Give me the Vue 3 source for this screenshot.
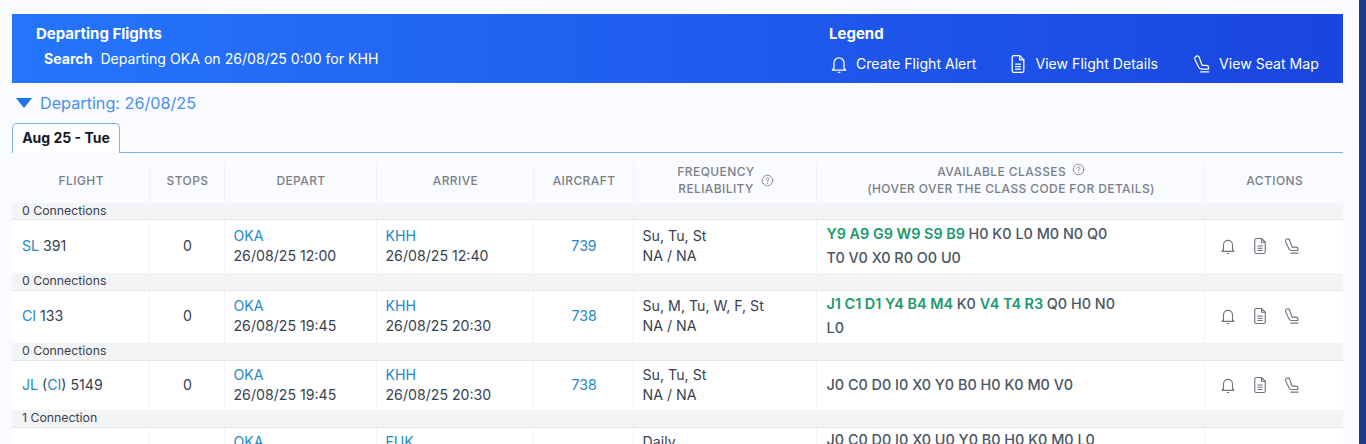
<script setup>
const rows = [
  { conn: '0 Connections', flight: [['SL', 1], [' 391', 0]], stops: '0', from: 'OKA', dep: '26/08/25 12:00', to: 'KHH', arr: '26/08/25 12:40', ac: '739', freq: 'Su, Tu, St', rel: 'NA / NA', parts: [['Y9 A9 G9 W9 S9 B9 ', 1], ['H0 K0 L0 M0 N0 Q0', 0]], cls2: 'T0 V0 X0 R0 O0 U0', h: 'r1' },
  { conn: '0 Connections', flight: [['CI', 1], [' 133', 0]], stops: '0', from: 'OKA', dep: '26/08/25 19:45', to: 'KHH', arr: '26/08/25 20:30', ac: '738', freq: 'Su, M, Tu, W, F, St', rel: 'NA / NA', parts: [['J1 C1 D1 Y4 B4 M4 ', 1], ['K0 ', 0], ['V4 T4 R3 ', 1], ['Q0 H0 N0', 0]], cls2: 'L0', h: 'r2' },
  { conn: '0 Connections', flight: [['JL', 1], [' (', 0], ['CI', 1], [') 5149', 0]], stops: '0', from: 'OKA', dep: '26/08/25 19:45', to: 'KHH', arr: '26/08/25 20:30', ac: '738', freq: 'Su, Tu, St', rel: 'NA / NA', parts: [['J0 C0 D0 I0 X0 Y0 B0 H0 K0 M0 V0', 0]], h: 'r3' },
  { conn: '1 Connection', flight: [], stops: '', from: 'OKA', dep: '', to: 'FUK', arr: '', ac: '', freq: 'Daily', rel: '', parts: [['J0 C0 D0 I0 X0 U0 Y0 B0 H0 K0 M0 L0', 0]], h: 'r4', noIcons: true }
]
</script>

<template>
  <div class="page">
    <main class="main">
      <header class="banner">
        <div class="b-left">
          <div class="b-title">Departing Flights</div>
          <div class="b-search"><b>Search</b><span>Departing OKA on 26/08/25 0:00 for KHH</span></div>
        </div>
        <div class="b-right">
          <div class="b-title">Legend</div>
          <div class="legend">
            <span class="lg lg1">
              <svg class="ic-lg" viewBox="0 0 24 24"><path d="M6 17V10.500a6 6 0 0 1 12 0V17l2 2.200H4z" /><path d="M11 22h2" /></svg>
              Create Flight Alert
            </span>
            <span class="lg lg2">
              <svg class="ic-lg" viewBox="0 0 24 24"><path d="M5 4a2 2 0 0 1 2-2h7l5 5v13a2 2 0 0 1-2 2H7a2 2 0 0 1-2-2z" /><path d="M14 2v5h5M9 12h6M9 15h6M9 18h6" /></svg>
              View Flight Details
            </span>
            <span class="lg">
              <svg class="ic-lg" viewBox="0 0 24 24"><path d="M4.500 3c1.800-1.200 3.600-.6 4.200 1l3.300 9.500h5c1.700 0 2.800 1 2.800 2.500v2H11.500c-1.700 0-2.800-.7-3.400-2L3.500 6.500C3.100 5.300 3.400 3.800 4.500 3z" /><path d="M10.500 21.500h9.500" /></svg>
              View Seat Map
            </span>
          </div>
        </div>
      </header>

      <div class="departing">
        <svg class="caret" viewBox="0 0 16 10"><path d="M0 0h16L8 10z" /></svg>
        Departing: 26/08/25
      </div>

      <div class="tabs"><div class="tab">Aug 25 - Tue</div></div>

      <table class="grid">
        <colgroup>
          <col class="c1" /><col class="c2" /><col class="c3" /><col class="c4" />
          <col class="c5" /><col class="c6" /><col class="c7" /><col class="c8" />
        </colgroup>
        <thead>
          <tr>
            <th class="first">FLIGHT</th>
            <th>STOPS</th>
            <th>DEPART</th>
            <th>ARRIVE</th>
            <th>AIRCRAFT</th>
            <th>
              <div class="freq-h">
                <div>FREQUENCY<br />RELIABILITY</div>
                <svg class="help" viewBox="0 0 16 16"><circle cx="8" cy="8" r="6.500" /><path d="M6.200 6.300a1.800 1.800 0 1 1 2.700 1.600c-.6.300-.9.700-.9 1.300M8 11.500v.3" /></svg>
              </div>
            </th>
            <th>
              AVAILABLE CLASSES
              <svg class="help help2" viewBox="0 0 16 16"><circle cx="8" cy="8" r="6.500" /><path d="M6.200 6.300a1.800 1.800 0 1 1 2.700 1.600c-.6.300-.9.700-.9 1.300M8 11.500v.3" /></svg>
              <br />(HOVER OVER THE CLASS CODE FOR DETAILS)
            </th>
            <th>ACTIONS</th>
          </tr>
        </thead>
        <tbody v-for="row in rows" :key="row.h">
          <tr class="conn" :class="{ 'conn-first': row.h === 'r1' }"><td colspan="8">{{ row.conn }}</td></tr>
          <tr class="flight" :class="row.h">
            <td class="fl"><template v-for="(p, i) in row.flight" :key="i"><span :class="{ link: p[1] }">{{ p[0] }}</span></template></td>
            <td class="center">{{ row.stops }}</td>
            <td class="pl"><div class="link">{{ row.from }}</div><div>{{ row.dep }}</div></td>
            <td class="pl"><div class="link">{{ row.to }}</div><div>{{ row.arr }}</div></td>
            <td class="center link">{{ row.ac }}</td>
            <td class="freq"><div>{{ row.freq }}</div><div>{{ row.rel }}</div></td>
            <td class="classes">
              <div><span v-for="(p, i) in row.parts" :key="i" :class="{ avail: p[1] }">{{ p[0] }}</span></div>
              <div v-if="row.cls2">{{ row.cls2 }}</div>
            </td>
            <td class="actions">
              <div v-if="!row.noIcons" class="acts">
                <svg class="ic" viewBox="0 0 24 24"><path d="M6 17V10.500a6 6 0 0 1 12 0V17l2 2.200H4z" /><path d="M11 22h2" /></svg>
                <svg class="ic" viewBox="0 0 24 24"><path d="M5 4a2 2 0 0 1 2-2h7l5 5v13a2 2 0 0 1-2 2H7a2 2 0 0 1-2-2z" /><path d="M14 2v5h5M9 12h6M9 15h6M9 18h6" /></svg>
                <svg class="ic" viewBox="0 0 24 24"><path d="M4.500 3c1.800-1.200 3.600-.6 4.200 1l3.300 9.500h5c1.700 0 2.800 1 2.800 2.500v2H11.500c-1.700 0-2.800-.7-3.400-2L3.500 6.500C3.100 5.300 3.400 3.800 4.500 3z" /><path d="M10.500 21.500h9.500" /></svg>
              </div>
            </td>
          </tr>
        </tbody>
      </table>
    </main>
    <aside class="edge"></aside>
  </div>
</template>

<style>
html, body { margin: 0; height: 444px; overflow: hidden; background: #f9fbfe; }
</style>

<style scoped>
.page {
  display: flex;
  height: 444px;
  overflow: hidden;
  background: #f9fbfe;
  font-family: Inter, "Noto Sans", sans-serif;
  font-size: 14.15px;
  color: #374151;
}
.main { flex: 1; min-width: 0; padding: 14px 16px 0 12px; }
.edge { width: 7px; background: #1e3a8a; }

.banner {
  display: flex;
  justify-content: space-between;
  height: 69px;
  box-sizing: border-box;
  padding: 10px 0 0 24px;
  color: #fff;
  background: linear-gradient(to right, #2575fc, #1a45e0);
}
.b-title { font-weight: 700; font-size: 15px; line-height: 19px; }
.b-search { display: flex; gap: 8px; margin: 7px 0 0 8px; font-size: 14.1px; line-height: 18px; }
.b-search b { font-weight: 700; }
.b-right { width: 514px; flex-shrink: 0; }
.legend { display: flex; margin-top: 10px; line-height: 22px; }
.lg { display: flex; align-items: center; gap: 7px; font-size: 14.1px; white-space: nowrap; }
.lg1 { margin-right: 32px; }
.lg2 { margin-right: 34px; }
.ic-lg { width: 20px; height: 20px; fill: none; stroke: #fff; stroke-width: 1.5; stroke-linecap: round; stroke-linejoin: round; }

.departing {
  display: flex;
  align-items: center;
  gap: 8px;
  margin: 10px 0 0 4px;
  height: 20px;
  font-size: 16.2px;
  color: #4a8ff0;
}
.caret { width: 16px; height: 10px; fill: #1a73e8; }

.tabs { margin-top: 10px; border-bottom: 1px solid #7fb2ea; height: 29px; }
.tab {
  width: 108px;
  height: 30px;
  box-sizing: border-box;
  background: #fff;
  border: 1px solid #7fb2ea;
  border-bottom: 0;
  border-radius: 5px 5px 0 0;
  text-align: center;
  font-size: 14px;
  font-weight: 700;
  line-height: 28px;
  color: #111827;
}

.grid {
  width: 100%;
  margin-top: 9px;
  border-collapse: collapse;
  table-layout: fixed;
}
.c1 { width: 137px; } .c2 { width: 75px; } .c3 { width: 152px; } .c4 { width: 157px; }
.c5 { width: 100px; } .c6 { width: 183px; } .c7 { width: 388px; } .c8 { width: 139px; }

th {
  height: 41px;
  padding: 0 0 5px 2px;
  box-sizing: border-box;
  font-size: 12px;
  font-weight: 500;
  line-height: 17px;
  letter-spacing: .4px;
  color: #7a7f87;
  text-align: center;
  border-left: 1px solid #f0f2f5;
  background: #f9fbfe;
}
th.first { border-left: 0; }
.freq-h { display: flex; align-items: center; justify-content: center; gap: 6px; }
.help { width: 13px; height: 13px; fill: none; stroke: #7a7f87; stroke-width: 1.1; stroke-linecap: round; vertical-align: -1px; }
.help2 { margin-left: 2px; vertical-align: 0; }

.conn td {
  height: 18px;
  padding: 0 0 0 10px;
  font-size: 12.3px;
  line-height: 16px;
  color: #374151;
  background: #f3f4f6;
  border-bottom: 1px solid #e5e7eb;
  box-sizing: border-box;
}
.conn-first td { height: 16px; }
.flight td { background: #fff; padding: 0; line-height: 20px; border-left: 1px solid #f0f2f5; box-sizing: border-box; }
.flight td:first-child { border-left: 0; }
.r1 td { height: 53px; padding-bottom: 1px; }
.r2 td { height: 52px; padding-bottom: 2px; }
.r3 td { height: 49px; }
.r4 td { height: 50px; vertical-align: top; padding-top: 4px; }
.fl { padding-left: 10px !important; }
.pl { padding-left: 9px !important; }
.center { text-align: center; padding-left: 2px !important; }
.freq { padding-left: 9px !important; font-size: 14.2px; }
.link { color: #2388c9; }
.classes { padding-left: 10px !important; font-size: 14.4px; font-weight: 500; line-height: 24px !important; color: #4b5563; }
.r4 td.classes { padding-top: 0; }
.avail { color: #1a9a6c; font-weight: 600; }
.acts { display: flex; justify-content: flex-start; gap: 14px; padding-left: 14px; }
.ic { width: 18px; height: 18px; fill: none; stroke: #6b7280; stroke-width: 1.5; stroke-linecap: round; stroke-linejoin: round; }
</style>
